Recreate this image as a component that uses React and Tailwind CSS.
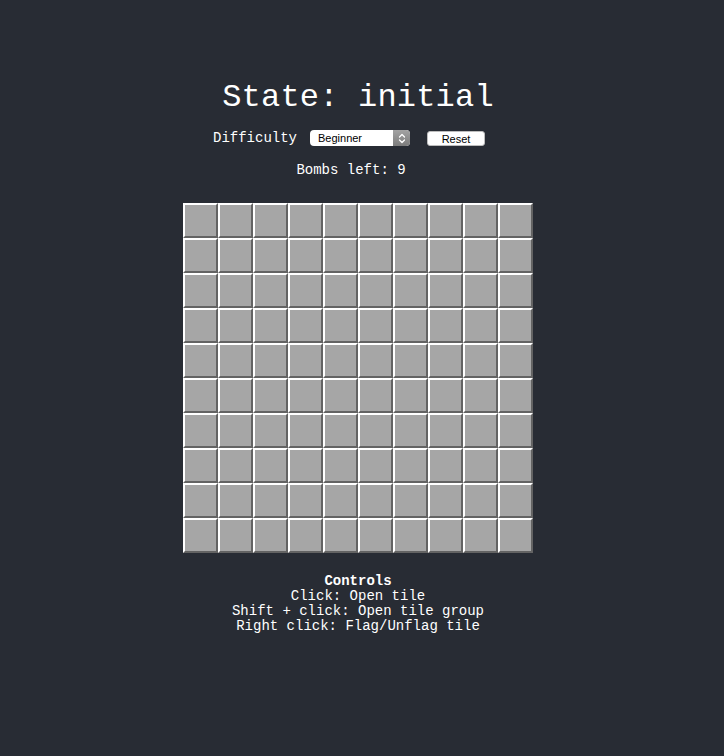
import React from 'react';

const ROWS = 10;
const COLS = 10;

const Tile = () => (
  <div className="w-[35px] h-[35px] bg-[#a6a6a6] border-2 border-t-white border-l-white border-r-[#636363] border-b-[#636363]"></div>
);

export default function App() {
  const tiles = [];
  for (let i = 0; i < ROWS * COLS; i++) tiles.push(<Tile key={i} />);

  return (
    <div className="min-h-[756px] w-full bg-[#282c34] text-white font-['Liberation_Mono','Courier_New',monospace]">
      <div className="w-[716px] flex flex-col items-center pt-[79px]">
        {/* titel */}
        <h1 className="text-[32px] leading-[37px] tracking-[0.2px]">State: initial</h1>

        {/* difficulty + reset */}
        <div className="flex items-center mt-[14px] h-[16px] text-[14px] mr-[18px]">
          <span className="mr-[13px]">Difficulty</span>
          <div className="relative w-[100px] h-[16px] bg-white rounded-[4px] flex items-center text-black font-['Liberation_Sans',Arial,sans-serif] text-[11px] overflow-hidden">
            <span className="pl-[8px]">Beginner</span>
            <div className="absolute right-0 top-0 h-full w-[17px] bg-gradient-to-b from-[#a3a3a3] to-[#7c7c7c] flex items-center justify-center">
              <svg width="8" height="11" viewBox="0 0 8 11" fill="none" stroke="white" strokeWidth="1.3" strokeLinecap="round" strokeLinejoin="round">
                <path d="M1.5 4 L4 1.5 L6.5 4" />
                <path d="M1.5 7 L4 9.5 L6.5 7" />
              </svg>
            </div>
          </div>
          <button className="ml-[17px] w-[58px] h-[15px] bg-white rounded-[3px] text-black font-['Liberation_Sans',Arial,sans-serif] text-[11px] leading-[15px] border border-[#bdbdbd]">
            Reset
          </button>
        </div>

        <div className="mt-[16px] text-[14px] leading-[16px] mr-[14px]">Bombs left: 9</div>

        {/* bord */}
        <div className="mt-[25px] grid grid-cols-[repeat(10,35px)]">
          {tiles}
        </div>

        <div className="mt-[21px] text-[14px] leading-[15px] text-center">
          <div className="font-bold">Controls</div>
          <div>Click: Open tile</div>
          <div>Shift + click: Open tile group</div>
          <div>Right click: Flag/Unflag tile</div>
        </div>
      </div>
    </div>
  );
}
